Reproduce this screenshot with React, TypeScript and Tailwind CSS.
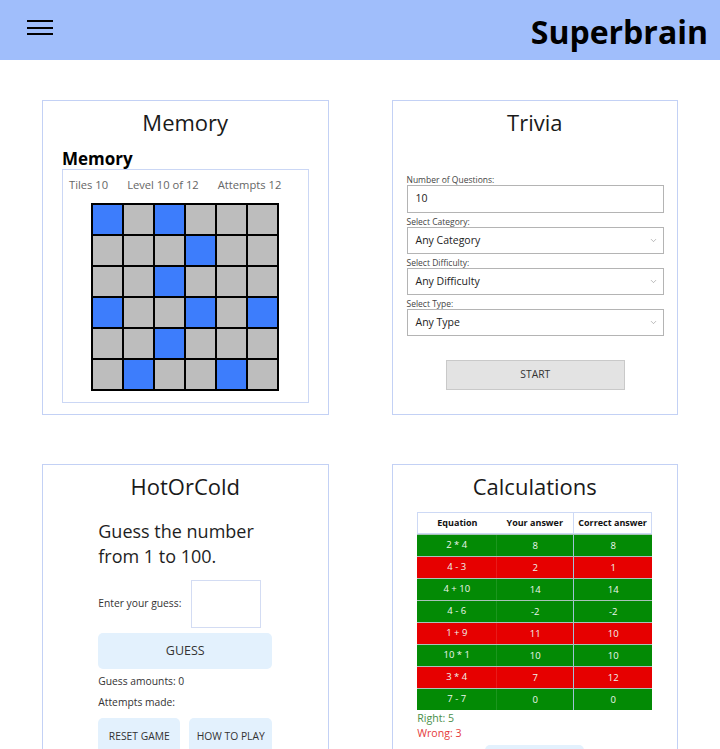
import { ChevronDown } from "lucide-react"

const tiles = [
  [1, 0, 1, 0, 0, 0],
  [0, 0, 0, 1, 0, 0],
  [0, 0, 1, 0, 0, 0],
  [1, 0, 0, 1, 0, 1],
  [0, 0, 1, 0, 0, 0],
  [0, 1, 0, 0, 1, 0],
]

const calcRows = [
  { eq: "2 * 4", yours: "8", correct: "8", ok: true },
  { eq: "4 - 3", yours: "2", correct: "1", ok: false },
  { eq: "4 + 10", yours: "14", correct: "14", ok: true },
  { eq: "4 - 6", yours: "-2", correct: "-2", ok: true },
  { eq: "1 + 9", yours: "11", correct: "10", ok: false },
  { eq: "10 * 1", yours: "10", correct: "10", ok: true },
  { eq: "3 * 4", yours: "7", correct: "12", ok: false },
  { eq: "7 - 7", yours: "0", correct: "0", ok: true },
]

function Card({ title, children }: { title: string; children: React.ReactNode }) {
  return (
    <div className="flex flex-col border border-[#c3d1f5] bg-white">
      <div className="flex h-[46px] items-center justify-center pb-[3px] text-[22px] text-[#1a1a1a]">{title}</div>
      {children}
    </div>
  )
}

function MemoryCard() {
  return (
    <Card title="Memory">
      <div className="px-[19px] pb-[11px]">
        <div className="flex h-[22px] items-center text-[17px] font-bold leading-none text-black">Memory</div>
        <div className="border border-[#cbd7f5] pb-[11px] pt-[7px]">
          <div className="flex h-[16px] items-center gap-[19px] pl-[6px] text-[11.2px] text-[#666]">
            <span>Tiles 10</span>
            <span>Level 10 of 12</span>
            <span>Attempts 12</span>
          </div>
          <div className="mx-auto mt-[10px] w-[188px] border border-black">
            {tiles.map((row, r) => (
              <div key={r} className="flex">
                {row.map((t, c) => (
                  <div
                    key={c}
                    className={
                      "h-[31px] w-[31px] border border-black " + (t ? "bg-[#3d7dfc]" : "bg-[#bdbdbd]")
                    }
                  />
                ))}
              </div>
            ))}
          </div>
        </div>
      </div>
    </Card>
  )
}

function Field({ label, children, first }: { label: string; children: React.ReactNode; first?: boolean }) {
  return (
    <div className={first ? "mt-[27px]" : "mt-[3px]"}>
      <div className="h-[11px] text-[8.5px] leading-[11px] text-[#444]">{label}</div>
      {children}
    </div>
  )
}

function SelectBox({ value }: { value: string }) {
  return (
    <div className="flex h-[27px] items-center justify-between border border-[#b4b4b4] bg-white pl-[8px] pr-[5px] text-[10.5px] font-medium text-[#222]">
      <span>{value}</span>
      <ChevronDown size={9} strokeWidth={1.5} className="text-[#888]" />
    </div>
  )
}

function TriviaCard() {
  return (
    <Card title="Trivia">
      <div className="pl-[14px] pr-[13px]">
        <Field label="Number of Questions:" first>
          <div className="flex h-[28px] items-center border border-[#b4b4b4] bg-white pl-[8px] text-[10.5px] font-medium text-[#222]">
            10
          </div>
        </Field>
        <Field label="Select Category:">
          <SelectBox value="Any Category" />
        </Field>
        <Field label="Select Difficulty:">
          <SelectBox value="Any Difficulty" />
        </Field>
        <Field label="Select Type:">
          <SelectBox value="Any Type" />
        </Field>
        <div className="mt-[24px] flex justify-center">
          <button className="h-[30px] w-[179px] border border-[#c9c9c9] bg-[#e3e3e3] text-[10.3px] font-medium text-[#333]">
            START
          </button>
        </div>
      </div>
    </Card>
  )
}

function HotOrColdCard() {
  return (
    <Card title="HotOrCold">
      <div className="mx-auto w-[174px] pb-[20px]">
        <div className="mt-[8px] text-[18px] leading-[25px] text-[#1e1e1e]">
          Guess the number
          <br />
          from 1 to 100.
        </div>
        <div className="mt-[11px] flex items-center gap-[10px]">
          <span className="text-[10.3px] text-[#333]">Enter your guess:</span>
          <div className="h-[48px] w-[70px] border border-[#d3dcf3] bg-white" />
        </div>
        <button className="mt-[5px] h-[36px] w-full rounded-[5px] bg-[#e3f1fd] text-[12.5px] text-[#333]">
          GUESS
        </button>
        <div className="mt-[5px] h-[15px] text-[10.3px] leading-[15px] text-[#333]">Guess amounts: 0</div>
        <div className="mt-[6px] h-[15px] text-[10.3px] leading-[15px] text-[#333]">Attempts made:</div>
        <div className="mt-[8px] flex gap-[9px]">
          <button className="h-[38px] w-[82px] rounded-[5px] bg-[#e3f1fd] text-[10.3px] text-[#333]">
            RESET GAME
          </button>
          <button className="h-[38px] w-[83px] rounded-[5px] bg-[#e3f1fd] text-[10.3px] text-[#333]">
            HOW TO PLAY
          </button>
        </div>
      </div>
    </Card>
  )
}

function CalculationsCard() {
  return (
    <Card title="Calculations">
      <div className="mx-auto w-[235px] pb-[20px]">
        <div className="mt-[1px] flex h-[22px] items-center border border-[#cdd9f5] bg-white text-[9px] font-bold text-[#111]">
          <div className="w-[79px] text-center">Equation</div>
          <div className="w-[77px] text-center">Your answer</div>
          <div className="flex h-full w-[79px] items-center justify-center border-l border-[#cdd9f5]">
            Correct answer
          </div>
        </div>
        {calcRows.map((row, i) => (
          <div
            key={i}
            className={
              "flex h-[22px] items-center border-t border-[#a9c2b9] text-[9.5px] text-[#eef6ee] " +
              (row.ok ? "bg-[#038a05]" : "bg-[#e60000]")
            }
          >
            <div className="w-[79px] text-center">{row.eq}</div>
            <div className="h-full w-[77px] border-l border-white/10 text-center leading-[21px]">{row.yours}</div>
            <div className="h-full w-[79px] border-l border-[#9fc3d6] text-center leading-[21px]">{row.correct}</div>
          </div>
        ))}
        <div className="mt-[1px] text-[10.6px] leading-[15px] text-[#4a8f4a]">Right: 5</div>
        <div className="text-[10.6px] leading-[15px] text-[#e5393a]">Wrong: 3</div>
        <div className="mx-auto mt-[4px] h-[36px] w-[99px] rounded-[5px] bg-[#e3f1fd]" />
      </div>
    </Card>
  )
}

export default function App() {
  return (
    <div className="min-h-screen bg-white" style={{ fontFamily: '"Open Sans", "Noto Sans", sans-serif' }}>
      <header className="flex h-[60px] items-center justify-between bg-[#a0befb] pl-[27px] pr-[12px]">
        <div className="mb-[5px] flex w-[26px] flex-col gap-[4.5px]">
          <span className="h-[2px] w-full bg-black" />
          <span className="h-[2px] w-full bg-black" />
          <span className="h-[2px] w-full bg-black" />
        </div>
        <h1 className="mt-[3px] text-[32px] font-bold text-black">Superbrain</h1>
      </header>
      <main className="grid grid-cols-2 gap-x-[63px] gap-y-[49px] px-[42px] pt-[40px]">
        <MemoryCard />
        <TriviaCard />
        <HotOrColdCard />
        <CalculationsCard />
      </main>
    </div>
  )
}
